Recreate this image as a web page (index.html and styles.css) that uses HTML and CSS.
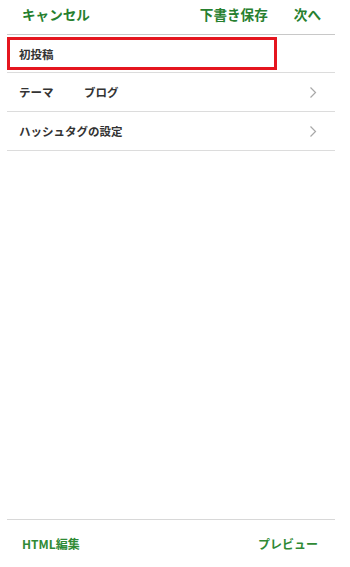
FILE: index.html
```html
<!DOCTYPE html>
<html lang="ja">
<head>
<meta charset="utf-8">
<link rel="stylesheet" href="styles.css">
</head>
<body>
<div class="app">
  <header class="topbar">
    <span class="link">キャンセル</span>
    <div class="actions">
      <span class="link">下書き保存</span>
      <span class="link">次へ</span>
    </div>
  </header>
  <main class="list">
    <div class="title-row">
      <div class="title-box">初投稿</div>
    </div>
    <div class="row">
      <span class="label">テーマ</span>
      <span class="value">ブログ</span>
      <svg class="chev" width="8" height="13" viewBox="0 0 8 13"><polyline points="1.5,1.5 6.5,6.5 1.5,11.5" fill="none" stroke="#a8a8a8" stroke-width="1.2"/></svg>
    </div>
    <div class="row">
      <span class="label wide">ハッシュタグの設定</span>
      <svg class="chev" width="8" height="13" viewBox="0 0 8 13"><polyline points="1.5,1.5 6.5,6.5 1.5,11.5" fill="none" stroke="#a8a8a8" stroke-width="1.2"/></svg>
    </div>
  </main>
  <footer class="bottombar">
    <span class="link small">HTML編集</span>
    <span class="link small">プレビュー</span>
  </footer>
</div>
</body>
</html>
```

FILE: styles.css
```css
html, body {
  margin: 0;
  padding: 0;
  background: #fff;
}
body {
  font-family: "Noto Sans CJK JP", "Noto Sans", sans-serif;
  color: #333;
}
.app {
  display: flex;
  flex-direction: column;
  height: 567px;
}
.topbar {
  height: 34px;
  display: flex;
  align-items: center;
  justify-content: space-between;
  padding: 0 29px 4px 22px;
  box-sizing: border-box;
}
.actions {
  display: flex;
  gap: 26px;
}
.link {
  color: #27802f;
  font-weight: bold;
  font-size: 13.6px;
  line-height: 1;
}
.list {
  flex: 1;
  margin: 0 15px 0 7px;
  border-top: 1px solid #c8c8c8;
}
.title-row {
  padding: 2px 0;
  border-bottom: 1px solid #dcdcdc;
}
.title-box {
  width: 270px;
  height: 33px;
  box-sizing: border-box;
  border: 3px solid #e5161f;
  padding-left: 9px;
  display: flex;
  align-items: center;
  font-size: 11.5px;
  font-weight: bold;
  color: #333;
}
.row {
  height: 38px;
  display: flex;
  align-items: center;
  padding: 0 18px 0 12px;
  border-bottom: 1px solid #dcdcdc;
  font-size: 11.5px;
  font-weight: bold;
  color: #333;
}
.label {
  width: 65px;
}
.label.wide {
  width: auto;
}
.value {
  flex: 1;
}
.chev {
  margin-left: auto;
}
.bottombar {
  height: 47px;
  margin: 0 15px 0 7px;
  border-top: 1px solid #d8d8d8;
  display: flex;
  align-items: center;
  justify-content: space-between;
  padding: 0 17px 0 15px;
}
.link.small {
  font-size: 12px;
  color: #2f8a35;
}
```
